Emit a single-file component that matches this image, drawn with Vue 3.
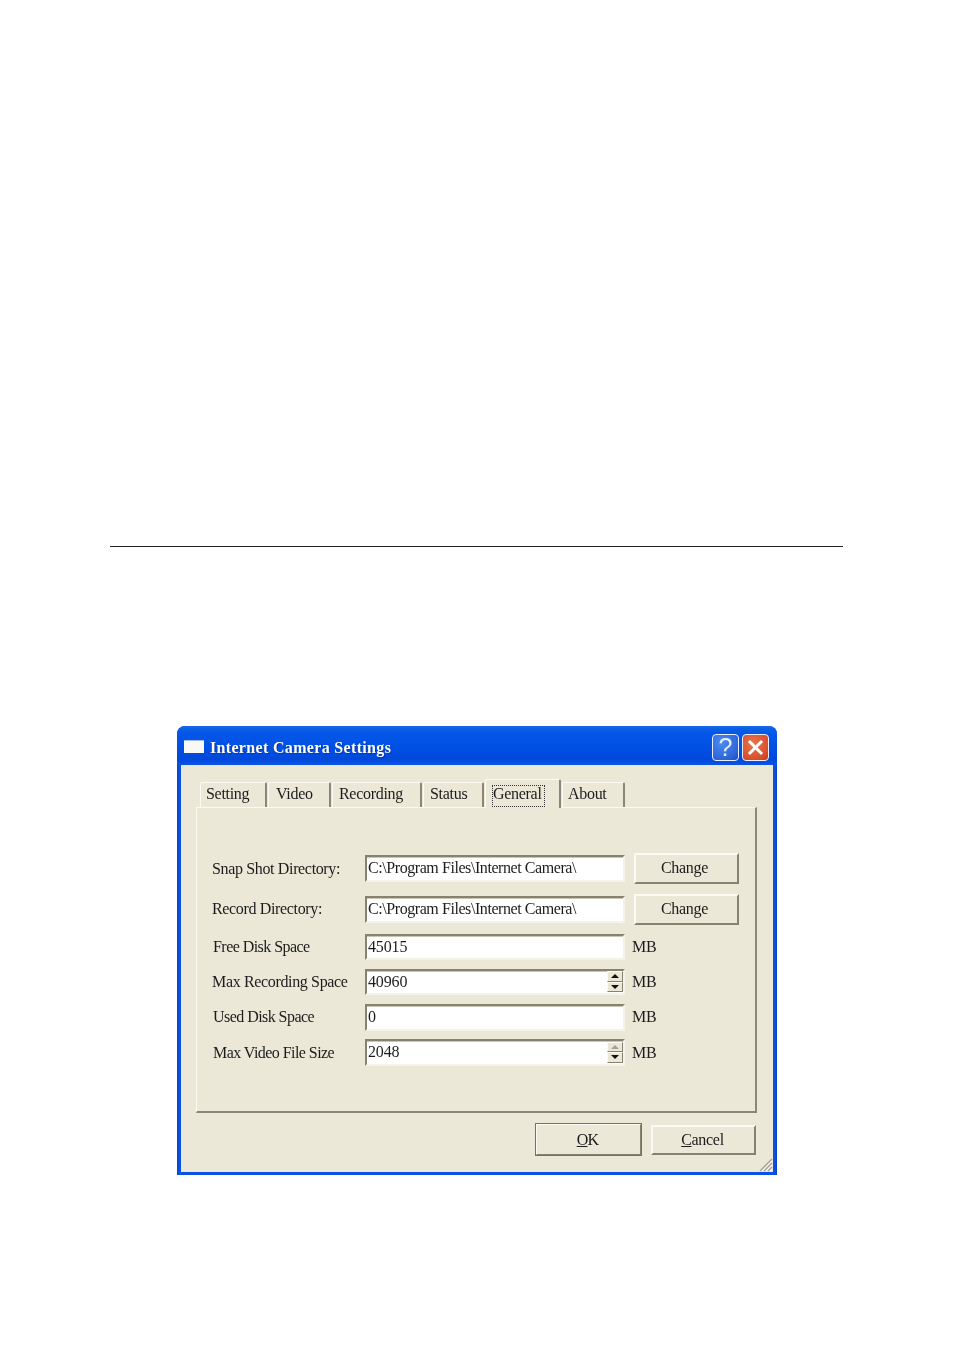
<script setup>
const tabs = [
  { name: 'Setting', w: 67, gap: 1, pad: 5 },
  { name: 'Video', w: 63, gap: 1, pad: 7 },
  { name: 'Recording', w: 90, gap: 1, pad: 6 },
  { name: 'Status', w: 61, gap: 1, pad: 6 },
  { name: 'General', w: 76, gap: 1, pad: 6, active: true },
  { name: 'About', w: 63, gap: 0, pad: 5 }
]
const rows = [
  { label: 'Snap Shot Directory:', value: 'C:\\Program Files\\Internet Camera\\', button: true, h: 27, path: true },
  { label: 'Record Directory:', value: 'C:\\Program Files\\Internet Camera\\', button: true, h: 27, path: true },
  { label: 'Free Disk Space', value: '45015', unit: 'MB', h: 26, tight: true },
  { label: 'Max Recording Space', value: '40960', unit: 'MB', spin: true, h: 26 },
  { label: 'Used Disk Space', value: '0', unit: 'MB', h: 27, tight: true },
  { label: 'Max Video File Size', value: '2048', unit: 'MB', spin: true, atMax: true, h: 27, tight: true }
]
</script>

<template>
  <div class="page">
    <div class="rule"></div>
    <section class="window">
      <header class="titlebar">
        <span class="app-icon"></span>
        <span class="title">Internet Camera Settings</span>
        <button class="cap help">?</button>
        <button class="cap close">
          <svg width="17" height="17" viewBox="0 0 17 17"><path d="M3 3 L14 14 M14 3 L3 14" stroke="#fff" stroke-width="3" stroke-linecap="square"/></svg>
        </button>
      </header>
      <div class="client">
        <nav class="tabs">
          <div
            v-for="t in tabs"
            :key="t.name"
            class="tab"
            :class="{ active: t.active }"
            :style="{ width: t.w + 'px', marginRight: t.gap + 'px', paddingLeft: t.pad + 'px' }"
          >
            <span class="tab-label">{{ t.name }}</span>
          </div>
        </nav>
        <div class="panel">
          <div class="form">
            <template v-for="r in rows" :key="r.label">
              <label class="lbl" :class="{ tight: r.tight }">{{ r.label }}</label>
              <div class="field" :style="{ height: r.h + 'px' }">
                <span class="val" :class="{ path: r.path }">{{ r.value }}</span>
                <span v-if="r.spin" class="spin">
                  <span class="step"><span class="arrow up" :class="{ off: r.atMax }"></span></span>
                  <span class="step"><span class="arrow down"></span></span>
                </span>
              </div>
              <button v-if="r.button" class="btn change">Change</button>
              <span v-else class="unit">{{ r.unit }}</span>
            </template>
          </div>
        </div>
        <footer class="actions">
          <button class="btn ok"><u>O</u>K</button>
          <button class="btn cancel"><u>C</u>ancel</button>
        </footer>
        <svg class="grip" width="16" height="16" viewBox="0 0 16 16">
          <path d="M15 3 L3 15 M15 7 L7 15 M15 11 L11 15" stroke="#a5a294" stroke-width="1.4" fill="none"/>
          <path d="M15 5 L5 15 M15 9 L9 15 M15 13 L13 15" stroke="#fff" stroke-width="1" fill="none"/>
        </svg>
      </div>
    </section>
  </div>
</template>

<style scoped>
.page {
  width: 954px;
  height: 1350px;
  background: #fff;
  padding-top: 546px;
  box-sizing: border-box;
  overflow: hidden;
  font-family: "Liberation Serif", serif;
  color: #1c1c1c;
}
.rule {
  width: 733px;
  height: 1px;
  margin-left: 110px;
  background: #222;
}
.window {
  width: 600px;
  height: 449px;
  margin: 179px 0 0 177px;
  box-sizing: border-box;
  border-radius: 8px 8px 0 0;
  background: linear-gradient(90deg, #0a3ec4 0, #0a52e4 2px, #0a52e4 598px, #0a3ec4 100%);
  filter: blur(0.45px);
  display: flex;
  flex-direction: column;
}
.titlebar {
  height: 39px;
  flex: none;
  box-sizing: border-box;
  padding: 8px 8px 0 7px;
  display: flex;
  align-items: flex-start;
  border-radius: 8px 8px 0 0;
  background: linear-gradient(#1a6ae6 0, #0a5ee6 8%, #0456e8 20%, #0050e4 55%, #0048dc 85%, #0a55e4 100%);
}
.app-icon {
  width: 20px;
  height: 13px;
  margin-top: 6px;
  background: #f8f8f4;
  border-top: 1px solid #9fc0ee;
  box-sizing: border-box;
}
.title {
  margin-left: 6px;
  margin-top: 4px;
  font-size: 16px;
  line-height: 20px;
  font-weight: bold;
  letter-spacing: 0.33px;
  color: #fff;
  flex: 1;
  text-shadow: 1px 1px 0 #0a3aa8;
}
.cap {
  width: 27px;
  height: 27px;
  padding: 0;
  box-sizing: border-box;
  border: 1px solid #e8eefc;
  border-radius: 4px;
  display: flex;
  align-items: center;
  justify-content: center;
}
.help {
  background: radial-gradient(circle at 35% 30%, #4d8cf0, #2a62d8 75%, #1a48b8);
  color: #e6eeff;
  font: normal 25px "Liberation Sans", sans-serif;
  margin-right: 3px;
}
.close {
  background: radial-gradient(circle at 40% 35%, #e8764e, #d84c28 75%, #b83a18);
}
.client {
  flex: 1;
  margin: 0 4px 3px 4px;
  padding: 14px 15px 0 15px;
  background: #ebe8d8;
  position: relative;
  box-sizing: border-box;
}
.tabs {
  display: flex;
  align-items: flex-end;
  height: 28px;
  padding-left: 4px;
  position: relative;
  z-index: 1;
}
.tab {
  height: 25px;
  flex: none;
  box-sizing: border-box;
  border-top: 1px solid #fbfaf3;
  border-left: 1px solid #fbfaf3;
  border-right: 2px solid #8a8778;
  border-radius: 2px 2px 0 0;
  background: #ebe8d8;
  font-size: 16px;
  line-height: 22px;
  letter-spacing: -0.3px;
  white-space: nowrap;
}
.tab.active {
  height: 29px;
  margin-bottom: -1px;
  padding-top: 3px;
}
.tab.active .tab-label {
  display: inline-block;
  height: 22px;
  line-height: 16px;
  border: 1px dotted #333;
  padding: 0 2px 0 0;
  box-sizing: border-box;
}
.panel {
  width: 561px;
  height: 306px;
  box-sizing: border-box;
  border-top: 1px solid #fbfaf3;
  border-left: 1px solid #fbfaf3;
  border-right: 2px solid #8a8778;
  border-bottom: 2px solid #8a8778;
  padding: 45px 0 0 15px;
}
.form {
  display: grid;
  grid-template-columns: 144px 260px 105px;
  grid-template-rows: 31px 32px 26px 26px 26px 27px;
  column-gap: 9px;
  row-gap: 9px;
  align-items: center;
}
.lbl,
.unit {
  font-size: 16px;
  line-height: 20px;
  letter-spacing: -0.35px;
  white-space: nowrap;
}
.lbl.tight {
  letter-spacing: -0.55px;
  padding-left: 1px;
}
.field {
  box-sizing: border-box;
  background: #fff;
  border-top: 2px solid #85826f;
  border-left: 2px solid #85826f;
  border-right: 2px solid #f5f3e9;
  border-bottom: 2px solid #f5f3e9;
  box-shadow: inset 0 1px 0 #c9c6b6;
  display: flex;
  align-items: center;
  justify-content: space-between;
  font-size: 16px;
  padding: 0 0 1px 1px;
  width: 260px;
}
.val {
  white-space: nowrap;
  letter-spacing: -0.15px;
}
.val.path {
  letter-spacing: -0.43px;
}
.spin {
  width: 16px;
  height: 21px;
  display: flex;
  flex-direction: column;
}
.step {
  flex: 1;
  box-sizing: border-box;
  background: #ebe8d8;
  border-top: 1px solid #fbfaf3;
  border-left: 1px solid #fbfaf3;
  border-right: 1px solid #85826f;
  border-bottom: 1px solid #85826f;
  display: flex;
  align-items: center;
  justify-content: center;
}
.arrow {
  width: 0;
  height: 0;
  border-left: 4px solid transparent;
  border-right: 4px solid transparent;
}
.arrow.up {
  border-bottom: 4px solid #111;
}
.arrow.up.off {
  border-bottom-color: #a5a294;
}
.arrow.down {
  border-top: 4px solid #111;
}
.btn {
  box-sizing: border-box;
  background: #ebe8d8;
  border-top: 2px solid #fbfaf3;
  border-left: 2px solid #fbfaf3;
  border-right: 2px solid #85826f;
  border-bottom: 2px solid #85826f;
  font-family: "Liberation Serif", serif;
  font-size: 16px;
  letter-spacing: -0.3px;
  color: #1c1c1c;
  padding: 0;
}
.change {
  width: 105px;
  height: 31px;
  padding: 0 4px 1px 0;
}
.unit {
  margin-left: -2px;
}
.actions {
  display: flex;
  align-items: center;
  margin-top: 10px;
  padding-left: 339px;
}
.ok {
  width: 107px;
  height: 33px;
  letter-spacing: -0.8px;
  padding-right: 2px;
  outline: 1px solid #75725f;
  outline-offset: -1px;
}
.cancel {
  width: 105px;
  height: 30px;
  margin-left: 9px;
  padding-right: 2px;
}
.grip {
  position: absolute;
  right: 0;
  bottom: 0;
}
</style>

<style>
html, body { margin: 0; background: #fff; }
</style>
